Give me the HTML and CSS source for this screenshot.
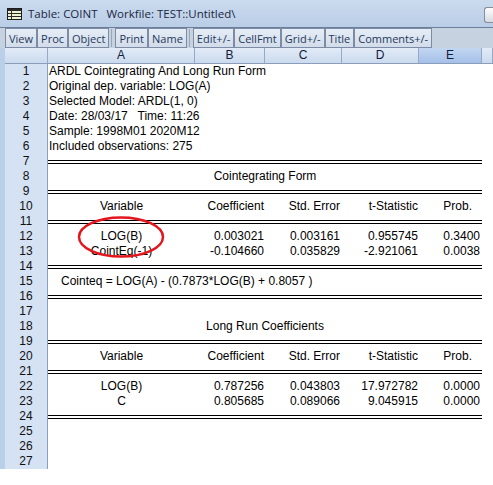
FILE: index.html
```html
<!DOCTYPE html>
<html lang="en">
<head>
    <meta charset="UTF-8">
    <title>Table: COINT</title>
    <link rel="stylesheet" href="styles.css">
</head>
<body>
    <div class="window">
        <div class="titlebar">
            <svg class="icon" width="16" height="12" viewBox="0 0 16 12">
                <rect x="0.5" y="0.5" width="14" height="11" fill="#eef4cf" stroke="#1d1d1d"/>
                <rect x="1" y="1" width="13" height="2" fill="#2a2a2a"/>
                <path d="M4.5 3v8M1 5.5h13M1 8.5h13" stroke="#2a2a2a" fill="none"/>
            </svg>
            <span class="title">Table: COINT   Workfile: TEST::Untitled\</span>
            <span class="winbtn"></span>
        </div>

        <div class="toolbar">
            <button>View</button><button>Proc</button><button>Object</button>
            <span class="sep"></span>
            <button>Print</button><button>Name</button>
            <span class="sep"></span>
            <button>Edit+/-</button><button>CellFmt</button><button>Grid+/-</button><button>Title</button><button>Comments+/-</button>
        </div>

        <div class="sheet">
            <div class="row colhead">
                <div></div><div>A</div><div>B</div><div>C</div><div>D</div><div class="sel">E</div><div></div>
            </div>

            <div class="row"><div class="rh">1</div><div class="c wide">ARDL Cointegrating And Long Run Form</div></div>
            <div class="row"><div class="rh">2</div><div class="c wide">Original dep. variable: LOG(A)</div></div>
            <div class="row"><div class="rh">3</div><div class="c wide">Selected Model: ARDL(1, 0)</div></div>
            <div class="row"><div class="rh">4</div><div class="c wide">Date: 28/03/17   Time: 11:26</div></div>
            <div class="row"><div class="rh">5</div><div class="c wide">Sample: 1998M01 2020M12</div></div>
            <div class="row"><div class="rh">6</div><div class="c wide">Included observations: 275</div></div>
            <div class="row"><div class="rh">7</div><div class="dbl"><div class="rule"></div></div></div>
            <div class="row"><div class="rh">8</div><div class="c wide ctr">Cointegrating Form</div></div>
            <div class="row"><div class="rh">9</div><div class="dbl"><div class="rule"></div></div></div>
            <div class="row">
                <div class="rh">10</div>
                <div class="c ctr">Variable</div><div class="c num">Coefficient</div><div class="c num b2">Std. Error</div>
                <div class="c num">t-Statistic</div><div class="c num prob">Prob.</div>
            </div>
            <div class="row"><div class="rh">11</div><div class="dbl"><div class="rule"></div></div></div>
            <div class="row">
                <div class="rh">12</div>
                <div class="c ctr">LOG(B)</div><div class="c num">0.003021</div><div class="c num b2">0.003161</div>
                <div class="c num">0.955745</div><div class="c num b2">0.3400</div>
            </div>
            <div class="row">
                <div class="rh">13</div>
                <div class="c ctr">CointEq(-1)</div><div class="c num">-0.104660</div><div class="c num b2">0.035829</div>
                <div class="c num">-2.921061</div><div class="c num b2">0.0038</div>
            </div>
            <div class="row"><div class="rh">14</div><div class="dbl"><div class="rule"></div></div></div>
            <div class="row"><div class="rh">15</div><div class="c wide indent">Cointeq = LOG(A) - (0.7873*LOG(B) + 0.8057 )</div></div>
            <div class="row"><div class="rh">16</div><div class="dbl"><div class="rule"></div></div></div>
            <div class="row"><div class="rh">17</div></div>
            <div class="row"><div class="rh">18</div><div class="c wide ctr">Long Run Coefficients</div></div>
            <div class="row"><div class="rh">19</div><div class="dbl"><div class="rule"></div></div></div>
            <div class="row">
                <div class="rh">20</div>
                <div class="c ctr">Variable</div><div class="c num">Coefficient</div><div class="c num b2">Std. Error</div>
                <div class="c num">t-Statistic</div><div class="c num prob">Prob.</div>
            </div>
            <div class="row"><div class="rh">21</div><div class="dbl"><div class="rule"></div></div></div>
            <div class="row">
                <div class="rh">22</div>
                <div class="c ctr">LOG(B)</div><div class="c num">0.787256</div><div class="c num b2">0.043803</div>
                <div class="c num">17.972782</div><div class="c num b2">0.0000</div>
            </div>
            <div class="row">
                <div class="rh">23</div>
                <div class="c ctr">C</div><div class="c num">0.805685</div><div class="c num b2">0.089066</div>
                <div class="c num">9.045915</div><div class="c num b2">0.0000</div>
            </div>
            <div class="row"><div class="rh">24</div><div class="dbl"><div class="rule"></div></div></div>
            <div class="row"><div class="rh">25</div></div>
            <div class="row"><div class="rh">26</div></div>
            <div class="row"><div class="rh">27</div></div>

            <!-- red circle drawn over LOG(B) -->
            <svg class="mark" width="88" height="42" viewBox="0 0 88 42">
                <ellipse cx="44" cy="21" rx="42" ry="19.5" fill="none" stroke="#e3161d" stroke-width="2.5"/>
            </svg>
        </div>
    </div>
</body>
</html>
```

FILE: styles.css
```css
body {
    margin: 0;
    background-color: #fff;
    font-family: "Liberation Sans", Arial, sans-serif;
    font-size: 12px;
    color: #000;
}
.window {
    width: 493px;
    overflow: hidden;
}

/* title bar */
.titlebar {
    height: 27px;
    display: flex;
    align-items: center;
    background: linear-gradient(#cbdbef, #b9cde6);
    font-family: "Open Sans", sans-serif;
    font-size: 11.5px;
    color: #1c2640;
}
.titlebar .icon {
    margin: 1px 5px 0 7px;
}
.titlebar .title {
    flex: 1;
    white-space: pre;
}
.titlebar .winbtn {
    align-self: flex-start;
    margin-top: 7px;
    width: 8px;
    height: 14px;
    border: 1px solid #888d96;
    border-right: none;
    border-radius: 3px 0 0 3px;
    background: linear-gradient(#fdfdfe, #d6dbe2);
}

/* toolbar */
.toolbar {
    height: 20px;
    display: flex;
    padding-left: 5px;
    border-top: 1px solid #6d7f9a;
    background-color: #c7d2e0;
}
.toolbar button {
    height: 20px;
    margin: 0;
    padding: 0 3px;
    border: 1px solid #7c8ca4;
    background: linear-gradient(#e6edf6, #d2dcea);
    font-family: "Open Sans", sans-serif;
    font-size: 11px;
    line-height: 17px;
    color: #1e395b;
}
.toolbar .sep {
    width: 1px;
    margin: 1px 3px 1px 2px;
    background-color: #98a7bc;
}

/* spreadsheet */
.sheet {
    position: relative;
    padding-left: 5px;
    background-color: #bacfe8;
}
.row {
    display: grid;
    grid-template-columns: 43px 147px 70px 77px 77px 63px 1fr;
    height: 15px;
    line-height: 15px;
    background-color: #fff;
}
.colhead {
    height: 16px;
    border-bottom: 1px solid #8a9eb9;
    box-sizing: border-box;
    line-height: 15px;
    background: linear-gradient(#e2ebf7, #cbdaee);
    color: #10203a;
}
.colhead div {
    text-align: center;
    border-right: 1px solid #95aac6;
}
.colhead .sel {
    background: linear-gradient(#c2d6f1, #a5c0e8);
}
.rh {
    box-sizing: border-box;
    text-align: center;
    background-color: #d4e2f4;
    border-right: 1px solid #8c9fba;
    border-bottom: 1px solid #eef4fb;
    color: #111;
}
.c {
    white-space: pre;
    padding: 0 1px;
}
.wide {
    grid-column: 2 / -1;
}
.ctr {
    text-align: center;
}
.wide.ctr {
    grid-column: 2 / 7;
}
.indent {
    padding-left: 13px;
}
.num {
    text-align: right;
}
.b2 {
    padding-right: 2px;
}
.prob {
    padding-right: 10px;
}
.dbl {
    grid-column: 2 / 7;
}
.dbl .rule {
    margin-top: 6px;
    height: 4px;
    box-sizing: border-box;
    border-top: 1px solid #000;
    border-bottom: 1px solid #000;
}
.mark {
    position: absolute;
    left: 77px;
    top: 168px;
}
```
